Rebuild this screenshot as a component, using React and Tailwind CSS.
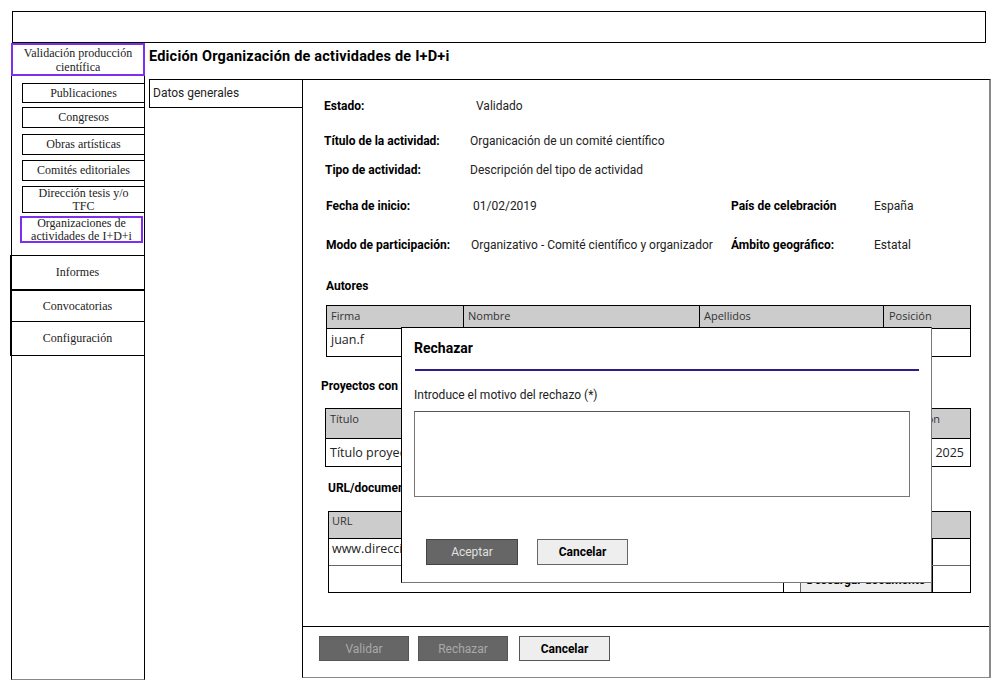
import React from "react";

const serif = { fontFamily: '"Liberation Serif", "Times New Roman", serif' };
const sans = { fontFamily: '"Open Sans", "Noto Sans", sans-serif' };

function SideItem({ children, className }) {
  return (
    <div
      className={`flex items-center justify-center text-center text-[12px] leading-[13px] text-[#222] ${className}`}
      style={serif}
    >
      {children}
    </div>
  );
}

function Field({ label, value, labelW }) {
  return (
    <div className="flex h-[16px] items-center leading-[16px]">
      <span className={`font-bold text-[12px] text-black ${labelW}`}>{label}</span>
      <span className="text-[12px] text-[#222]">{value}</span>
    </div>
  );
}

export default function App() {
  return (
    <div
      className="relative w-[1002px] h-[690px] overflow-hidden bg-white text-black"
      style={{ fontFamily: 'Roboto, "Liberation Sans", Arial, sans-serif' }}
    >
      {/* Top bar */}
      <div className="ml-[12px] mt-[11px] w-[974px] h-[32px] border border-black" />

      <div className="flex">
        {/* Sidebar */}
        <aside className="ml-[11px] w-[134px] h-[637px] border-x border-black border-b border-b-[#888] flex flex-col">
          <SideItem className="-mx-px h-[33px] border-2 border-[#7c2ff0] leading-[14px]">
            Validación producción
            <br />
            científica
          </SideItem>
          <SideItem className="ml-[10px] -mr-px mt-[7px] h-[20px] border border-black">Publicaciones</SideItem>
          <SideItem className="ml-[10px] -mr-px mt-[4px] h-[21px] border border-black">Congresos</SideItem>
          <SideItem className="ml-[10px] -mr-px mt-[6px] h-[21px] border border-black">Obras artísticas</SideItem>
          <SideItem className="ml-[10px] -mr-px mt-[5px] h-[21px] border border-black">Comités editoriales</SideItem>
          <SideItem className="ml-[10px] -mr-px mt-[5px] h-[27px] border border-black">
            Dirección tesis y/o
            <br />
            TFC
          </SideItem>
          <SideItem className="ml-[8px] mr-px mt-[3px] h-[27px] border-2 border-[#7c2ff0]">
            Organizaciones de
            <br />
            actividades de I+D+i
          </SideItem>
          <SideItem className="-ml-[2px] -mr-px mt-[12px] h-[35px] border border-black">Informes</SideItem>
          <SideItem className="-ml-[2px] -mr-px h-[32px] border border-black">Convocatorias</SideItem>
          <SideItem className="-ml-[2px] -mr-px h-[34px] border-x border-b border-black">Configuración</SideItem>
        </aside>

        {/* Main */}
        <div className="ml-[4px] flex flex-col">
          <div className="h-[36px] pt-[5px]">
            <h1 className="text-[14.5px] leading-[17px] font-bold tracking-[0.2px]">
              Edición Organización de actividades de I+D+i
            </h1>
          </div>

          <div className="flex">
            <div className="w-[153px] h-[29px] border-y border-l border-black pl-[3px] pt-[5px] text-[12px] leading-[16px] text-[#222]">
              Datos generales
            </div>

            <div className="w-[689px] h-[599px] border-t border-l border-black border-r-2 border-r-[#888] border-b border-b-[#888] flex flex-col">
              <div className="h-[547px] border-b border-black pl-[21px] pt-[18px]">
                <Field label="Estado:" value="Validado" labelW="w-[152px]" />
                <div className="mt-[19px]">
                  <Field label="Título de la actividad:" value="Organicación de un comité científico" labelW="w-[146px]" />
                </div>
                <div className="mt-[13px] ml-px">
                  <Field label="Tipo de actividad:" value="Descripción del tipo de actividad" labelW="w-[145px]" />
                </div>
                <div className="mt-[20px] ml-[2px] flex">
                  <div className="w-[405px]">
                    <Field label="Fecha de inicio:" value="01/02/2019" labelW="w-[147px]" />
                  </div>
                  <Field label="País de celebración" value="España" labelW="w-[143px]" />
                </div>
                <div className="mt-[23px] ml-[2px] flex">
                  <div className="w-[405px]">
                    <Field label="Modo de participación:" value="Organizativo - Comité científico y organizador" labelW="w-[145px]" />
                  </div>
                  <Field label="Ámbito geográfico:" value="Estatal" labelW="w-[143px]" />
                </div>

                <div className="mt-[25px] ml-[2px] h-[16px] leading-[16px] text-[12px] font-bold">Autores</div>

                {/* Autores table */}
                <div className="mt-[11px] ml-[2px] w-[645px] border border-black" style={sans}>
                  <div className="flex h-[23px] bg-[#cccccc] border-b border-black text-[11px] leading-[16px] text-[#333]">
                    <div className="w-[136px] pl-[4px] pt-[2px]">Firma</div>
                    <div className="w-[236px] pl-[4px] pt-[2px] border-l border-black">Nombre</div>
                    <div className="w-[184px] pl-[4px] pt-[2px] border-l border-black">Apellidos</div>
                    <div className="flex-1 pl-[5px] pt-[2px] border-l border-black">Posición</div>
                  </div>
                  <div className="h-[27px] pl-[4px] pt-[2px] text-[12.5px] leading-[18px] text-[#222]">juan.f</div>
                </div>

                <div className="mt-[21px] -ml-[3px] h-[16px] leading-[16px] text-[12px] font-bold">
                  Proyectos con financiación
                </div>

                {/* Proyectos table */}
                <div className="mt-[14px] ml-px w-[646px] border border-black" style={sans}>
                  <div className="flex h-[30px] bg-[#cccccc] border-b border-black text-[11px] leading-[16px] text-[#333]">
                    <div className="w-[220px] pl-[4px] pt-[2px]">Título</div>
                    <div className="w-[200px] pl-[4px] pt-[2px] border-l border-black">Entidad</div>
                    <div className="w-[140px] pl-[4px] pt-[2px] border-l border-black">Año inicio</div>
                    <div className="flex-1 pt-[2px] border-l border-black text-right whitespace-nowrap pr-[30px]">Duración</div>
                  </div>
                  <div className="flex h-[27px] items-center text-[12.5px] leading-[18px] text-[#222]">
                    <div className="w-[520px] pl-[4px]">Título proyecto</div>
                    <div className="flex-1 text-right whitespace-nowrap pr-[6px]">Diciembre 2025</div>
                  </div>
                </div>

                <div className="mt-[13px] ml-[4px] h-[16px] leading-[16px] text-[12px] font-bold">URL/documentos</div>

                {/* URL table */}
                <div className="mt-[15px] ml-[4px] w-[643px] border border-black" style={sans}>
                  <div className="flex h-[27px] bg-[#cccccc] border-b border-black text-[11px] leading-[16px] text-[#333]">
                    <div className="w-[455px] pl-[3px] pt-[1px]">URL</div>
                    <div className="w-[149px] pl-[4px] pt-[1px]">Documento</div>
                    <div className="flex-1" />
                  </div>
                  <div className="flex h-[27px] border-b border-[#666] text-[12.5px] leading-[18px] text-[#222]">
                    <div className="w-[455px] pl-[3px] pt-[1px]">www.direccion.es</div>
                    <div className="w-[149px] border-r border-black" />
                    <div className="flex-1" />
                  </div>
                  <div className="flex h-[26px]">
                    <div className="w-[454px]" />
                    <div className="w-[150px] border-l border-r border-black flex">
                      <div
                        className="ml-[16px] w-[132px] h-[26px] bg-[#eeeeee] border-x border-t border-[#666] flex items-center justify-center whitespace-nowrap text-[12px] font-bold"
                        style={{ fontFamily: 'Roboto, "Liberation Sans", sans-serif' }}
                      >
                        Descargar documento
                      </div>
                    </div>
                    <div className="flex-1" />
                  </div>
                </div>
              </div>

              {/* Footer */}
              <div className="flex pt-[9px] pl-[16px]">
                <button className="w-[90px] h-[25px] bg-[#666666] border border-[#555] text-[12px] text-[#a9a9a9]">
                  Validar
                </button>
                <button className="ml-[9px] w-[90px] h-[25px] bg-[#666666] border border-[#555] text-[12px] text-[#a9a9a9]">
                  Rechazar
                </button>
                <button className="ml-[11px] w-[91px] h-[25px] bg-[#eeeeee] border border-[#555] text-[12px] font-bold text-black">
                  Cancelar
                </button>
              </div>
            </div>
          </div>
        </div>
      </div>

      {/* Modal */}
      <div className="absolute left-[401px] top-[327px] w-[531px] h-[256px] bg-white border border-black border-r-[#777] border-b-[#777] pl-[12px] pt-[11px] flex flex-col">
        <div className="h-[18px] leading-[18px] text-[14px] font-bold">Rechazar</div>
        <div className="mt-[12px] ml-px w-[504px] h-[2px] bg-[#2e1b8c]" />
        <div className="mt-[16px] h-[16px] leading-[16px] text-[12px] text-[#222]">Introduce el motivo del rechazo (*)</div>
        <div className="mt-[8px] w-[496px] h-[86px] border border-[#777] border-t-[#555]" />
        <div className="mt-[42px] flex">
          <button className="ml-[12px] w-[92px] h-[26px] bg-[#666666] border border-[#444] text-[12px] text-[#e0e0e0]">
            Aceptar
          </button>
          <button className="ml-[19px] w-[91px] h-[26px] bg-[#eeeeee] border border-[#666] text-[12px] font-bold text-black">
            Cancelar
          </button>
        </div>
      </div>
    </div>
  );
}
